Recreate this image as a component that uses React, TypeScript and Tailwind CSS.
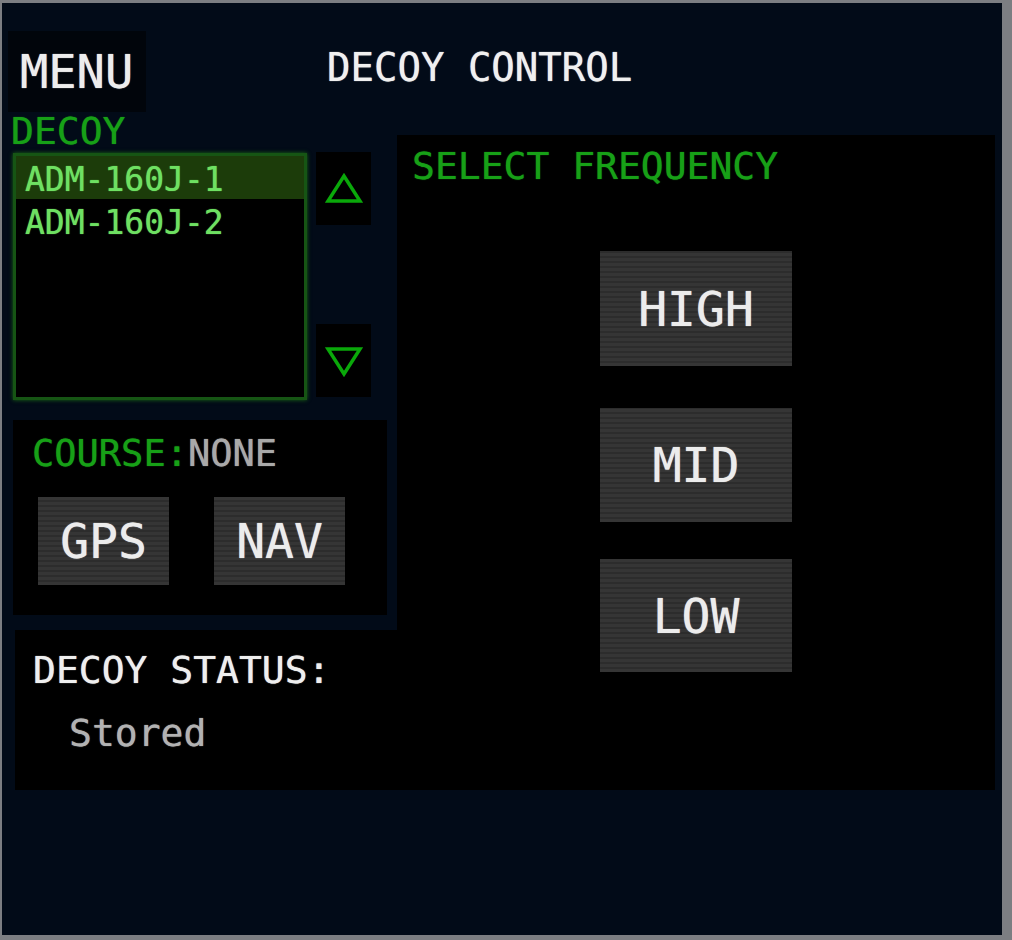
const mono = "font-['DejaVu_Sans_Mono',monospace] leading-none [text-shadow:0_0_1px_currentColor]";

function Triangle({ down }: { down?: boolean }) {
  return (
    <svg width="38" height="32" viewBox="0 0 38 32">
      <polygon
        points={down ? '3,4 35,4 19,29' : '3,28 35,28 19,3'}
        fill="none"
        stroke="#0aa80a"
        strokeWidth="3.5"
      />
    </svg>
  );
}

function GrayButton({ label, className }: { label: string; className: string }) {
  return (
    <div
      className={`flex items-center justify-center bg-[#333333] bg-[repeating-linear-gradient(0deg,#353535_0px,#353535_3px,#2c2c2c_3px,#2c2c2c_5px)] ${className}`}
    >
      <span className={`${mono} text-[48px] text-[#ececec]`}>{label}</span>
    </div>
  );
}

export default function App() {
  return (
    <div className="w-[1012px] h-[940px] overflow-hidden bg-[#020b18] border-t-[3px] border-r-[10px] border-b-[5px] border-l-[2px] border-[#7c7e82]">

      {/* ── Header ─────────────────────────────────────────── */}
      <div className="flex items-start">
        <div className="ml-[6px] mt-[28px] w-[138px] h-[81px] bg-[#01050b] flex items-center pl-[12px]">
          <span className={`${mono} text-[47px] text-[#ededed]`}>MENU</span>
        </div>
        <p className={`${mono} ml-[181px] mt-[45px] text-[39px] text-[#f0f0f0]`}>DECOY CONTROL</p>
      </div>

      {/* ── Body ───────────────────────────────────────────── */}
      <div className="flex items-start">

        {/* Left column */}
        <div className="ml-[6px] w-[389px] flex flex-col">
          <p className={`${mono} pl-[3px] text-[38px] text-[#17a017] mb-[2px]`}>DECOY</p>

          <div className="flex items-start">
            <div className="ml-[5px] mt-[1px] w-[294px] h-[247px] bg-black border-[3px] border-[#165514] shadow-[0_0_4px_#1a6a14]">
              <div className="h-[43px] bg-[#1c3c0a] pl-[9px] pt-[7px]">
                <span className={`${mono} text-[33px] text-[#6ee062]`}>ADM-160J-1</span>
              </div>
              <div className="h-[43px] pl-[9px] pt-[7px]">
                <span className={`${mono} text-[33px] text-[#6ee062]`}>ADM-160J-2</span>
              </div>
            </div>
            <div className="ml-[9px] h-[245px] flex flex-col justify-between">
              <div className="w-[55px] h-[73px] bg-black flex items-center justify-center">
                <Triangle />
              </div>
              <div className="w-[55px] h-[73px] bg-black flex items-center justify-center">
                <Triangle down />
              </div>
            </div>
          </div>

          {/* Course */}
          <div className="ml-[5px] mt-[20px] w-[374px] h-[195px] bg-black pt-[15px]">
            <p className={`${mono} pl-[19px] text-[37px]`}>
              <span className="text-[#17a017]">COURSE:</span>
              <span className="text-[#a9a9a9]">NONE</span>
            </p>
            <div className="flex gap-[45px] pl-[25px] mt-[25px]">
              <GrayButton label="GPS" className="w-[131px] h-[88px]" />
              <GrayButton label="NAV" className="w-[131px] h-[88px]" />
            </div>
          </div>

          {/* Status */}
          <div className="ml-[7px] mt-[15px] w-[382px] h-[160px] bg-black pt-[21px]">
            <p className={`${mono} pl-[18px] text-[38px] text-[#efefef]`}>DECOY STATUS:</p>
            <p className={`${mono} pl-[54px] mt-[25px] text-[38px] text-[#b2b2b2]`}>Stored</p>
          </div>
        </div>

        {/* Right panel */}
        <div className="mt-[23px] w-[598px] h-[655px] bg-black pt-[12px] flex flex-col">
          <p className={`${mono} pl-[15px] text-[38px] text-[#17a017]`}>SELECT FREQUENCY</p>
          <div className="mt-[66px] flex flex-col items-center">
            <GrayButton label="HIGH" className="w-[192px] h-[115px]" />
            <GrayButton label="MID" className="mt-[42px] w-[192px] h-[114px]" />
            <GrayButton label="LOW" className="mt-[37px] w-[192px] h-[113px]" />
          </div>
        </div>

      </div>
    </div>
  );
}
